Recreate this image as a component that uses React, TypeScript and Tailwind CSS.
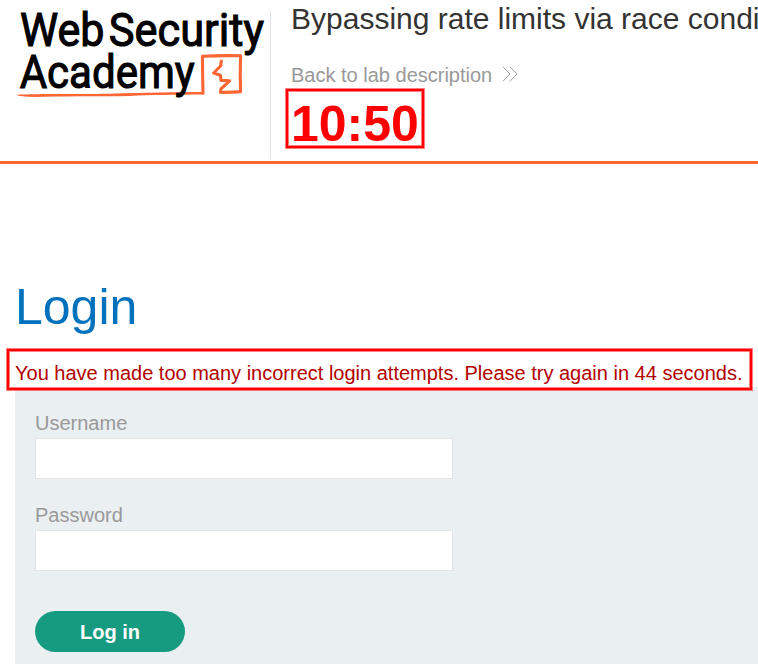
function Logo() {
  return (
    <svg width="270" height="110" viewBox="0 0 270 110" className="block shrink-0" fill="none">
      <g fill="#000" stroke="#000" strokeWidth="1.1" fontFamily="Roboto, sans-serif" fontSize="47" fontWeight="400">
        <text x="20" y="46.3" textLength="84.5" lengthAdjust="spacingAndGlyphs">Web</text>
        <text x="108.7" y="46.3" textLength="155.3" lengthAdjust="spacingAndGlyphs">Security</text>
      </g>
      <path
        d="M16 94.8 C40 93.4 80 94.4 110 93.8 C145 92.5 175 92.2 203.5 92 L203.5 94.6 C175 94.8 150 95 130 96 C95 96.6 60 96 35 97 Q20 96.8 16 94.8Z"
        fill="#ff6633"
      />
      <path
        d="M203 93.2 Q202.6 74 202.4 56.2 Q220 55.4 240.6 55.8 Q239.8 74 240.6 91.6 Q230 92.6 220.4 92.3 L221 88.8 L229.6 80.8 L221 80.4 L220.4 75.2 L213.6 73 L220.6 66 L221.3 61"
        stroke="#ff6633"
        strokeWidth="3.1"
        strokeLinejoin="round"
        strokeLinecap="round"
      />
      <text x="19.7" y="87.7" fill="#000" stroke="#000" strokeWidth="1.1" fontFamily="Roboto, sans-serif" fontSize="47" fontWeight="400" textLength="175" lengthAdjust="spacingAndGlyphs">
        Academy
      </text>
    </svg>
  );
}

function Field({ label, type }: { label: string; type: string }) {
  return (
    <label className="block h-[92px]">
      <span className="block h-[26px] text-[20px] leading-[23px] text-[#999999]">{label}</span>
      <input type={type} className="block h-[41px] w-[418px] border border-[#e4e4e4] bg-white px-2 outline-none" />
    </label>
  );
}

export default function App() {
  return (
    <div className="h-[664px] w-[758px] overflow-hidden bg-white font-['Liberation_Sans',Arial,sans-serif]">
      <header className="flex h-[164px] border-b-[3px] border-[#ff6633]">
        <Logo />
        <div className="mt-[11px] h-[148px] w-px shrink-0 bg-[#e2e2e2]" />
        <div className="min-w-0 flex-1 pl-5">
          <h2 className="h-[62px] text-[30px] leading-[38px] whitespace-nowrap text-[#333332]">
            Bypassing rate limits via race conditions
          </h2>
          <a className="flex h-[27px] items-center text-[20px] leading-[27px] whitespace-nowrap text-[#999999]">
            Back to lab description
            <svg width="16" height="16" viewBox="0 0 16 16" className="mb-[3px] ml-2.5" fill="none" stroke="#999999">
              <path d="M1 .8 8 8 1 15.2M8 .8 15 8 8 15.2" />
            </svg>
          </a>
          <p className="-ml-[5px] h-[59px] w-[138px] border-2 border-[#ff0000] pl-[3px] text-[50px] leading-[67px] font-bold text-[#ff0000] shadow-[0_0_0_1px_rgba(255,0,0,0.5),inset_0_0_0_1px_rgba(255,0,0,0.5)]">
            10:50
          </p>
        </div>
      </header>
      <main className="pt-[115px]">
        <h1 className="h-[70px] pl-[15px] text-[50px] leading-[57px] text-[#0071bc]">Login</h1>
        <p className="relative ml-[7px] h-[41px] w-[745px] border-2 border-[#ff0000] bg-white pt-[11px] pl-[6px] text-[20px] leading-[23px] whitespace-nowrap text-[#b30000] shadow-[0_0_0_1px_rgba(255,0,0,0.5),inset_0_0_0_1px_rgba(255,0,0,0.5)]">
          You have made too many incorrect login attempts. Please try again in 44 seconds.
        </p>
        <form className="-mt-[3px] ml-[15px] h-[277px] bg-[#eaeff2] pt-[25px] pl-5">
          <Field label="Username" type="text" />
          <Field label="Password" type="password" />
          <button type="button" className="mt-[15px] block h-[41px] w-[150px] rounded-full bg-[#179b80] text-[20px] font-bold text-white">
            Log in
          </button>
        </form>
      </main>
    </div>
  );
}
